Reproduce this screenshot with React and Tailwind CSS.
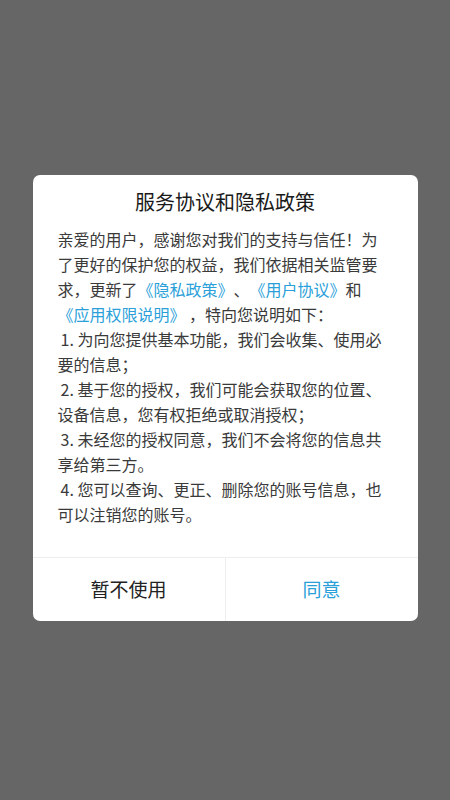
import React from 'react';

const Link = ({ children }) => <span className="text-[#2b9fd9]">{children}</span>;

const lines = [
  <>亲爱的用户，感谢您对我们的支持与信任！为</>,
  <>了更好的保护您的权益，我们依据相关监管要</>,
  <>
    求，更新了<Link>《隐私政策》</Link>、<Link>《用户协议》</Link>和
  </>,
  <>
    <Link>《应用权限说明》</Link> ，特向您说明如下：
  </>,
  <span className="pl-[3px]">1. 为向您提供基本功能，我们会收集、使用必</span>,
  <>要的信息；</>,
  <span className="pl-[3px]">2. 基于您的授权，我们可能会获取您的位置、</span>,
  <>设备信息，您有权拒绝或取消授权；</>,
  <span className="pl-[3px]">3. 未经您的授权同意，我们不会将您的信息共</span>,
  <>享给第三方。</>,
  <span className="pl-[3px]">4. 您可以查询、更正、删除您的账号信息，也</span>,
  <>可以注销您的账号。</>,
];

export default function App() {
  return (
    <div
      className="w-[450px] h-[800px] bg-[#666666] flex flex-col items-center pt-[175px] [text-spacing-trim:space-all]"
      style={{ fontFamily: '"Noto Sans CJK SC", "Noto Sans", sans-serif' }}
    >
      <div className="w-[385px] bg-white rounded-[7px] overflow-hidden flex flex-col">
        <div className="pt-[14px] text-center text-[20px] leading-[26px] text-[#1a1a1a]">
          服务协议和隐私政策
        </div>
        <div className="mt-[12px] px-[25px] pb-[30px] text-[16px] leading-[25px] text-[#3a3a3a]">
          {lines.map((l, i) => (
            <div key={i} className="whitespace-nowrap">
              {l}
            </div>
          ))}
        </div>
        <div className="flex border-t border-[#eeeeee] h-[64px]">
          <button className="flex-1 flex items-center justify-center text-[19px] text-[#222222] border-r border-[#eeeeee]">
            暂不使用
          </button>
          <button className="flex-1 flex items-center justify-center text-[19px] text-[#2b9fd9]">
            同意
          </button>
        </div>
      </div>
    </div>
  );
}
